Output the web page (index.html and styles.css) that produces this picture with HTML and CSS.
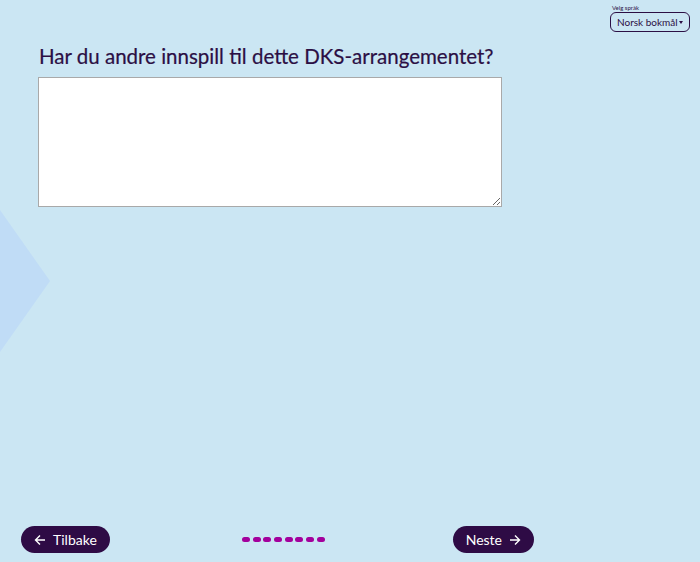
FILE: index.html
```html
<!DOCTYPE html>
<html lang="no">

<head>
  <meta charset="UTF-8">
  <title>DKS evaluering</title>
  <link rel="stylesheet" href="styles.css">
</head>

<body>
  <div class="deco"></div>
  <div class="lang">
    <label for="lang-select" class="lang-label">Velg språk</label>
    <button id="lang-select" class="lang-select">Norsk bokmål <span class="caret"></span></button>
  </div>
  <main class="question">
    <h1 class="question-title">Har du andre innspill til dette DKS-arrangementet?</h1>
    <textarea class="question-input" name="innspill"></textarea>
  </main>
  <footer class="nav">
    <button class="nav-button">
      <svg width="12" height="12" viewBox="0 0 12 12"><path d="M11 6H1.5M6 1.5L1.5 6 6 10.5" fill="none" stroke="#fff" stroke-width="1.4"/></svg>
      Tilbake
    </button>
    <div class="progress">
      <span></span><span></span><span></span><span></span><span></span><span></span><span></span><span></span>
    </div>
    <button class="nav-button">
      Neste
      <svg width="12" height="12" viewBox="0 0 12 12"><path d="M1 6h9.5M6 1.5L10.5 6 6 10.5" fill="none" stroke="#fff" stroke-width="1.4"/></svg>
    </button>
  </footer>
</body>

</html>
```

FILE: styles.css
```css
html {
  height: 100%;
}

body {
  font-family: Lato, "Open Sans", sans-serif;
  margin: 0;
  height: 100%;
  background-color: #cbe6f3;
  color: #2b0f44;
  display: flex;
  flex-direction: column;
  box-sizing: border-box;
  padding-bottom: 9px;
  overflow: hidden;
}

.deco {
  position: absolute;
  left: 0;
  top: 210px;
  width: 50px;
  height: 142px;
  background-color: #c0dcf6;
  clip-path: polygon(0 0, 100% 50%, 0 100%);
}

.lang {
  display: flex;
  flex-direction: column;
  align-items: flex-start;
  align-self: flex-end;
  margin: 4px 10px 0 0;
}

.lang-label {
  font-size: 6px;
  margin-left: 2px;
  line-height: 8px;
}

.lang-select {
  font-family: inherit;
  font-size: 10px;
  white-space: nowrap;
  color: #2b0f44;
  background: transparent;
  border: 1px solid #2b0f44;
  border-radius: 6px;
  height: 20px;
  width: 80px;
  padding: 0 6px;
  display: flex;
  align-items: center;
  justify-content: space-between;
}

.caret {
  border-left: 2.5px solid transparent;
  border-right: 2.5px solid transparent;
  border-top: 3px solid #2b0f44;
}

.question {
  position: relative;
  padding-left: 38px;
  width: 464px;
}

.question-title {
  font-size: 20.5px;
  font-weight: 400;
  white-space: nowrap;
  margin: 10px 0 7px 1px;
  line-height: 28px;
  -webkit-text-stroke: 0.2px #2b0f44;
}

.question-input {
  display: block;
  box-sizing: border-box;
  width: 464px;
  height: 130px;
  margin: 0;
  border: 1px solid #a9a9a9;
  background: #fff;
}

.nav {
  margin-top: auto;
  width: 513px;
  padding-left: 21px;
  display: flex;
  align-items: center;
  justify-content: space-between;
}

.nav-button {
  font-family: inherit;
  font-size: 14px;
  color: #fff;
  background-color: #2e0b45;
  border: none;
  border-radius: 14px;
  height: 27px;
  padding: 0 13px;
  display: flex;
  align-items: center;
  gap: 7px;
}

.progress {
  display: flex;
  gap: 2.7px;
  margin-left: 4px;
}

.progress span {
  width: 8px;
  height: 5px;
  border-radius: 3px;
  background-color: #a3009c;
}
```
